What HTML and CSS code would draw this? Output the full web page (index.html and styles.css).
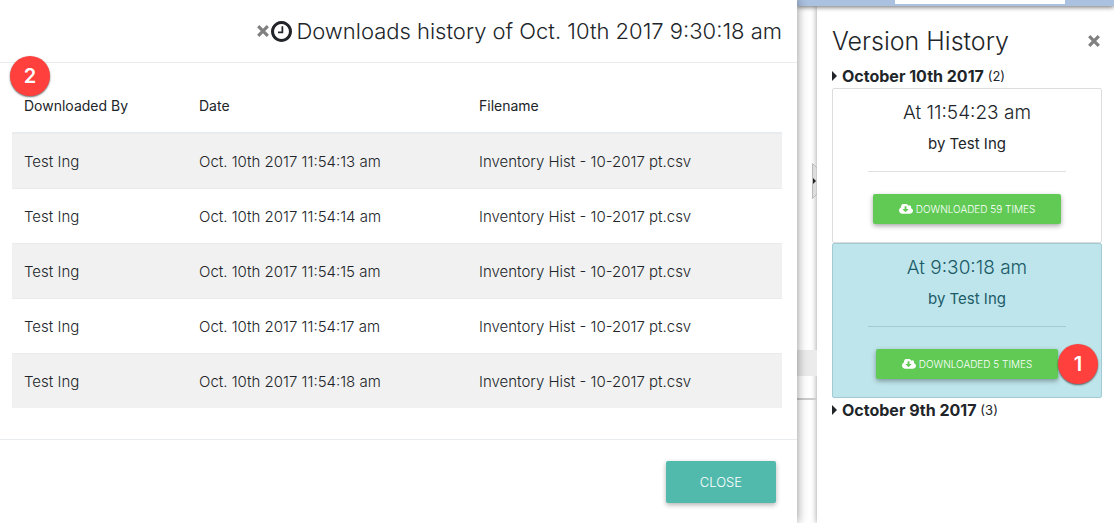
FILE: index.html
```html
<!DOCTYPE html>
<html lang="en">
<head>
<meta charset="utf-8">
<meta name="viewport" content="width=device-width, initial-scale=1">
<title>Version History</title>
<link rel="stylesheet" href="styles.css">
</head>
<body>
<svg class="sprite" aria-hidden="true">
  <symbol id="times" viewBox="0 0 12 12"><path d="M1.200 1.200 10.800 10.800M10.800 1.200 1.200 10.800" stroke="currentColor" stroke-width="3.200" fill="none"/></symbol>
  <symbol id="clock" viewBox="128 128 1536 1536"><path fill="currentColor" d="M1024 544v448q0 14-9 23t-23 9h-320q-14 0-23-9t-9-23v-64q0-14 9-23t23-9h224v-352q0-14 9-23t23-9h64q14 0 23 9t9 23zm416 352q0-148-73-273t-198-198-273-73-273 73-198 198-73 273 73 273 198 198 273 73 273-73 198-198 73-273zm224 0q0 209-103 385.5t-279.5 279.5-385.5 103-385.5-103-279.5-279.5-103-385.5 103-385.5 279.5-279.5 385.5-103 385.5 103 279.5 279.5 103 385.5z"/></symbol>
  <symbol id="cloud" viewBox="-64 256 1920 1280"><path fill="currentColor" d="M1216 928q0-14-9-23t-23-9h-224v-352q0-13-9.500-22.500t-22.500-9.500h-192q-13 0-22.500 9.500t-9.500 22.500v352h-224q-13 0-22.500 9.500t-9.500 22.500q0 14 9 23l352 352q9 9 23 9t23-9l351-351q10-12 10-24zm640 224q0 159-112.500 271.500t-271.500 112.500h-1088q-185 0-316.500-131.500t-131.500-316.500q0-130 70-240t188-165q-2-30-2-43 0-212 150-362t362-150q156 0 285.500 87t188.500 231q71-62 166-62 106 0 181 75t75 181q0 76-41 138 130 31 213.500 135.500t83.500 238.500z"/></symbol>
</svg>
<div class="page">
  <section class="modal" role="dialog" aria-labelledby="modal-title">
    <header class="modal-header">
      <button class="dismiss" type="button" aria-label="Close dialog"><svg class="icon-times"><use href="#times"/></svg></button>
      <svg class="icon-clock" aria-hidden="true"><use href="#clock"/></svg>
      <h2 class="modal-title" id="modal-title">Downloads history of Oct. 10th 2017 9:30:18 am</h2>
    </header>
    <div class="modal-body">
      <span class="callout callout-two">2</span>
      <table class="downloads">
        <colgroup><col class="col-user"><col class="col-date"><col></colgroup>
        <thead><tr><th scope="col">Downloaded By</th><th scope="col">Date</th><th scope="col">Filename</th></tr></thead>
        <tbody>
          <tr><td>Test Ing</td><td>Oct. 10th 2017 11:54:13 am</td><td>Inventory Hist - 10-2017 pt.csv</td></tr>
          <tr><td>Test Ing</td><td>Oct. 10th 2017 11:54:14 am</td><td>Inventory Hist - 10-2017 pt.csv</td></tr>
          <tr><td>Test Ing</td><td>Oct. 10th 2017 11:54:15 am</td><td>Inventory Hist - 10-2017 pt.csv</td></tr>
          <tr><td>Test Ing</td><td>Oct. 10th 2017 11:54:17 am</td><td>Inventory Hist - 10-2017 pt.csv</td></tr>
          <tr><td>Test Ing</td><td>Oct. 10th 2017 11:54:18 am</td><td>Inventory Hist - 10-2017 pt.csv</td></tr>
        </tbody>
      </table>
    </div>
    <footer class="modal-footer"><button class="close-button" type="button">CLOSE</button></footer>
  </section>
  <div class="workspace">
    <div class="topbar"><div class="topbar-field"></div></div>
    <div class="columns">
      <div class="gutter">
        <div class="gutter-row"></div>
        <div class="gutter-line"></div>
        <button class="handle" type="button" aria-label="Collapse panel">
          <svg class="handle-shape" viewBox="0 0 5 36"><path d="M.5.500 5 5v26L.5 35.500z" fill="#ddd" stroke="#bbb"/><path d="M1 15v6l3-3z" fill="#222"/></svg>
        </button>
      </div>
      <aside class="panel">
        <header class="panel-header">
          <h1 class="panel-title">Version History</h1>
          <button class="dismiss" type="button" aria-label="Close version history"><svg class="icon-times"><use href="#times"/></svg></button>
        </header>
        <h3 class="day"><span class="caret"></span>October 10th 2017 <small class="count">(2)</small></h3>
        <article class="version">
          <h4 class="time">At 11:54:23 am</h4>
          <p class="author">by Test Ing</p>
          <hr class="rule">
          <button class="downloaded" type="button"><svg class="icon-cloud" aria-hidden="true"><use href="#cloud"/></svg>DOWNLOADED 59 TIMES</button>
        </article>
        <article class="version selected">
          <h4 class="time">At 9:30:18 am</h4>
          <p class="author">by Test Ing</p>
          <hr class="rule">
          <button class="downloaded" type="button"><svg class="icon-cloud" aria-hidden="true"><use href="#cloud"/></svg>DOWNLOADED 5 TIMES</button>
          <span class="callout callout-one">1</span>
        </article>
        <h3 class="day"><span class="caret"></span>October 9th 2017 <small class="count">(3)</small></h3>
      </aside>
    </div>
  </div>
</div>
</body>
</html>
```
FILE: styles.css
```css
* { box-sizing: border-box; }
body {
  margin: 0;
  color: #212529;
  background: #fff;
  font-family: Inter, "Liberation Sans", sans-serif;
  font-size: 14px;
}
h1, h2, h3, h4, p { margin: 0; }
button { font-family: inherit; border: 0; cursor: pointer; }
.sprite { position: absolute; width: 0; height: 0; }
.page {
  display: grid;
  grid-template-columns: minmax(0, 1fr) 317px;
  min-height: 100vh;
}
.modal {
  z-index: 2;
  background: #fff;
  box-shadow: 0 0 10px rgba(0, 0, 0, .45);
}
.modal-header {
  display: flex;
  align-items: center;
  justify-content: flex-end;
  height: 63px;
  padding: 0 15px;
  border-bottom: 1px solid #e9ecef;
}
.modal-title { font-size: 22px; font-weight: 300; line-height: 32px; white-space: nowrap; }
.dismiss { display: flex; padding: 0; color: #808080; background: none; }
.icon-times { width: 12px; height: 12px; }
.icon-clock { width: 21px; height: 21px; margin: 0 4px 0 2px; }
.modal-body { position: relative; padding: 15px 15px 31px 12px; }
.downloads { width: 100%; border-collapse: collapse; table-layout: fixed; }
.col-user { width: 175px; }
.col-date { width: 280px; }
.downloads th, .downloads td { padding: 0 12px; text-align: left; height: 55px; }
.downloads th { font-weight: 400; border-bottom: 2px solid #e9ecef; }
.downloads td { padding-top: 2px; font-size: 15px; font-weight: 300; border-top: 1px solid #e9ecef; }
.downloads tbody tr:nth-child(odd) { background: #f1f1f1; }
.modal-footer {
  display: flex;
  justify-content: flex-end;
  padding: 21px 21px 20px;
  border-top: 1px solid #e9ecef;
}
.close-button {
  padding: 0 34px;
  height: 42px;
  font-size: 13px;
  font-weight: 300;
  color: #fff;
  background: #52baad;
  border-radius: 2px;
  box-shadow: 0 2px 5px rgba(0, 0, 0, .3);
}
.workspace { display: flex; flex-direction: column; }
.topbar {
  z-index: 1;
  height: 6px;
  padding: 0 49px 0 98px;
  background: #aac1e0;
  box-shadow: 0 1px 5px rgba(0, 0, 0, .6);
}
.topbar-field { height: 4px; background: #fff; }
.columns { display: flex; flex: 1; }
.gutter { position: relative; width: 20px; padding-top: 344px; }
.gutter-row { height: 26px; background: #ebebeb; }
.gutter-line { height: 24px; border-bottom: 2px solid #ccc; }
.handle { position: absolute; top: 157px; right: 0; padding: 0; background: none; }
.handle-shape { display: block; width: 5px; height: 36px; }
.panel {
  flex: 1;
  padding: 18px 12px 0 15px;
  background: #fff;
  box-shadow: 0 0 6px rgba(0, 0, 0, .4);
}
.panel-header { display: flex; align-items: center; justify-content: space-between; height: 34px; padding-right: 2px; }
.panel-title { font-size: 25px; font-weight: 300; }
.day { display: flex; align-items: center; height: 24px; margin: 6px 0 0; font-size: 16px; font-weight: 700; white-space: pre; }
.caret { margin-right: 5px; border: solid transparent; border-width: 5px 0 5px 5px; border-left-color: currentColor; }
.count { font-size: 13px; font-weight: 400; }
.version {
  position: relative;
  display: flex;
  flex-direction: column;
  align-items: center;
  height: 155px;
  padding-top: 11px;
  border: 1px solid #ddd;
  border-radius: 2px;
}
.version.selected { color: #1b5b68; background: #bee5eb; border-color: #a2cbd1; }
.version.selected + .day { margin-top: 0; }
.time { font-size: 19px; font-weight: 300; line-height: 26px; }
.author { margin-top: 6px; font-size: 15px; line-height: 24px; }
.rule { width: 198px; height: 1px; margin: 15px 0 22px; border: 0; background: rgba(0, 0, 0, .12); }
.downloaded {
  display: flex;
  align-items: center;
  gap: 3px;
  height: 30px;
  padding: 0 26px;
  font-size: 10px;
  font-weight: 300;
  color: #fff;
  background: #60ca55;
  border-radius: 2px;
  box-shadow: 0 2px 5px rgba(0, 0, 0, .35);
}
.icon-cloud { width: 14px; height: 10px; }
.callout {
  position: absolute;
  display: grid;
  place-items: center;
  width: 40px;
  height: 40px;
  color: #fff;
  font-size: 20px;
  font-weight: 600;
  background: #ff403c;
  border-radius: 50%;
  box-shadow: 0 1px 2px rgba(0, 0, 0, .6);
}
.callout-one { right: 3px; bottom: 13px; }
.callout-two { left: 10px; top: -7px; }
```
